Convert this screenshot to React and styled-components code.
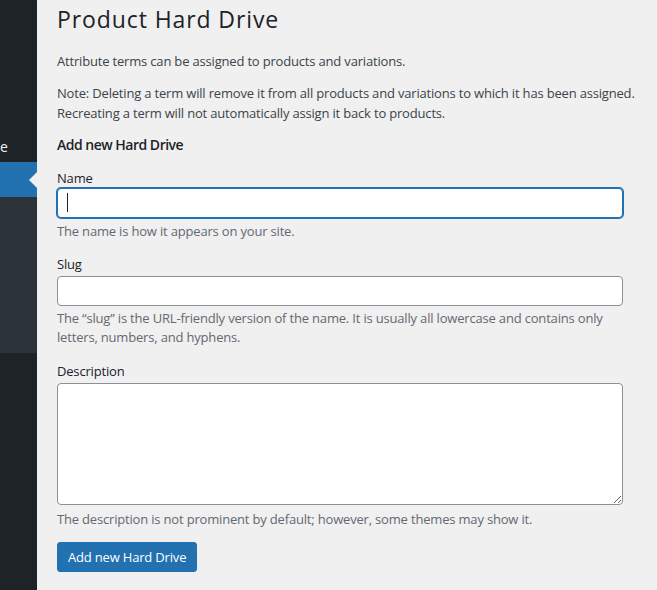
import React from "react";
import styled, { createGlobalStyle } from "styled-components";

const Global = createGlobalStyle`
  html, body { margin: 0; padding: 0; background: #f0f0f1; }
  body {
    font-family: "Open Sans", "Noto Sans", "Liberation Sans", sans-serif;
    font-size: 13px;
    line-height: 1.5;
    letter-spacing: -0.18px;
    color: #3c434a;
  }
  * { box-sizing: border-box; }
`;

const Layout = styled.div`
  display: flex;
  min-height: 590px;
  height: 590px;
  overflow: hidden;
`;

const Sidebar = styled.nav`
  width: 37px;
  flex: none;
  background: #1d2327;
  display: flex;
  flex-direction: column;
  padding-top: 131px;
`;

const MenuItem = styled.div`
  height: 31px;
  color: #f0f0f1;
  font-size: 14px;
  line-height: 31px;
  letter-spacing: 0;
  white-space: nowrap;
  overflow: hidden;
`;

const CurrentItem = styled.div`
  position: relative;
  height: 35px;
  background: #2271b1;
  &::after {
    content: "";
    position: absolute;
    right: 0;
    top: 50%;
    margin-top: -8px;
    border: 8px solid transparent;
    border-right-color: #f0f0f1;
    border-left-width: 0;
  }
`;

const Submenu = styled.div`
  height: 156px;
  background: #2c3338;
`;

const Main = styled.main`
  flex: 1;
  padding: 0 0 0 20px;
  min-width: 0;
`;

const Title = styled.h1`
  margin: 0;
  padding: 5px 0 4px;
  font-size: 23px;
  font-weight: 400;
  line-height: 1.3;
  letter-spacing: 0.9px;
  color: #1d2327;
`;

const Para = styled.p`
  margin: ${(p) => p.$top || 13}px 0 0;
  width: 600px;
`;

const SubTitle = styled.h2`
  margin: 12px 0 0;
  font-size: 14px;
  font-weight: 600;
  line-height: 1.4;
  letter-spacing: -0.5px;
  color: #1d2327;
`;

const Field = styled.div`
  margin-top: ${(p) => p.$top}px;
  display: flex;
  flex-direction: column;
`;

const Label = styled.label`
  color: #1d2327;
  font-size: 13px;
`;

const InputWrap = styled.div`
  position: relative;
  margin-top: ${(p) => p.$top || 0}px;
  width: 566px;
`;

const TextInput = styled.input`
  display: block;
  width: 566px;
  height: 30px;
  margin: 0;
  padding: 0 8px;
  font: inherit;
  letter-spacing: inherit;
  color: #2c3338;
  background: #fff;
  border: 1px solid ${(p) => (p.$focused ? "#2271b1" : "#8c8f94")};
  border-radius: 4px;
  box-shadow: ${(p) => (p.$focused ? "0 0 0 1px #2271b1" : "none")};
  outline: none;
`;

const Caret = styled.span`
  position: absolute;
  left: 10px;
  top: 5px;
  width: 1px;
  height: 19px;
  background: #1d2327;
`;

const TextArea = styled.textarea`
  display: block;
  width: 566px;
  height: 122px;
  margin: ${(p) => p.$top || 0}px 0 0 0;
  padding: 2px 6px;
  font: inherit;
  letter-spacing: inherit;
  background: #fff;
  border: 1px solid #8c8f94;
  border-radius: 4px;
  outline: none;
`;

const Help = styled.p`
  margin: ${(p) => p.$top || 2}px 0 0;
  color: #646970;
  width: 566px;
`;

const Button = styled.button`
  margin-top: ${(p) => p.$top}px;
  align-self: flex-start;
  height: 30px;
  padding: 0 10px;
  font: inherit;
  font-size: 13px;
  letter-spacing: -0.18px;
  line-height: 28px;
  color: #fff;
  background: #2271b1;
  border: 1px solid #2271b1;
  border-radius: 3px;
  cursor: pointer;
`;

const Form = styled.form`
  display: flex;
  flex-direction: column;
`;

export default function App() {
  return (
    <>
      <Global />
      <Layout>
        <Sidebar>
          <MenuItem>e</MenuItem>
          <CurrentItem />
          <Submenu />
        </Sidebar>
        <Main>
          <Title>Product Hard Drive</Title>
          <Para $top={13}>Attribute terms can be assigned to products and variations.</Para>
          <Para>
            Note: Deleting a term will remove it from all products and variations to which it has been assigned.
            Recreating a term will not automatically assign it back to products.
          </Para>
          <SubTitle>Add new Hard Drive</SubTitle>
          <Form onSubmit={(e) => e.preventDefault()}>
            <Field $top={14}>
              <Label htmlFor="tag-name">Name</Label>
              <InputWrap>
                <TextInput id="tag-name" type="text" $focused readOnly />
                <Caret />
              </InputWrap>
              <Help $top={3.5}>The name is how it appears on your site.</Help>
            </Field>
            <Field $top={14}>
              <Label htmlFor="tag-slug">Slug</Label>
              <InputWrap $top={1}>
                <TextInput id="tag-slug" type="text" />
              </InputWrap>
              <Help $top={3}>
                The “slug” is the URL-friendly version of the name. It is usually all lowercase and contains only
                letters, numbers, and hyphens.
              </Help>
            </Field>
            <Field $top={14}>
              <Label htmlFor="tag-description">Description</Label>
              <TextArea id="tag-description" $top={2} />
              <Help $top={5}>The description is not prominent by default; however, some themes may show it.</Help>
            </Field>
            <Button type="submit" $top={12}>Add new Hard Drive</Button>
          </Form>
        </Main>
      </Layout>
    </>
  );
}
